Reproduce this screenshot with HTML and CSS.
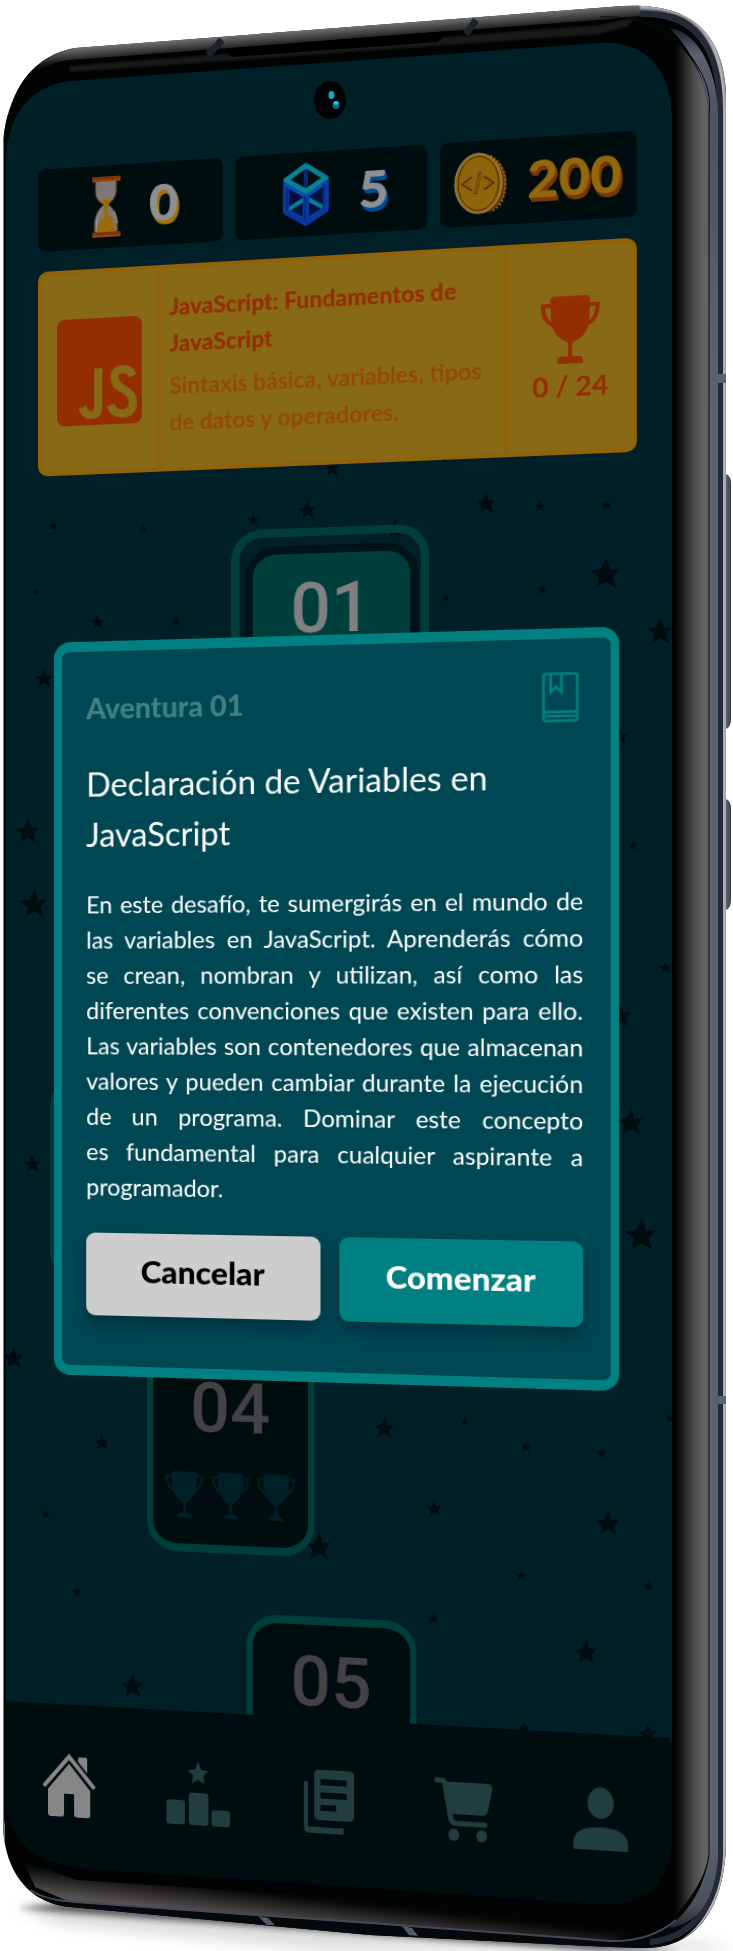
FILE: index.html
```html
<!DOCTYPE html>
<html lang="es">
<head>
<meta charset="utf-8">
<meta name="viewport" content="width=device-width, initial-scale=1">
<title>Aventura 01</title>
<link rel="stylesheet" href="styles.css">
</head>
<body>
<div class="stage">
  <svg class="phone" viewBox="0 0 733 1951" preserveAspectRatio="none" aria-hidden="true">
    <defs>
      <linearGradient id="side" x1="673" x2="709" y1="0" y2="0" gradientUnits="userSpaceOnUse">
        <stop offset="0" stop-color="#000"/><stop offset=".14" stop-color="#0c0c0c"/><stop offset=".55" stop-color="#474747"/><stop offset=".85" stop-color="#636362"/><stop offset="1" stop-color="#5e5e5e"/>
      </linearGradient>
      <linearGradient id="rail" x1="0" x2="0" y1="25" y2="1935" gradientUnits="userSpaceOnUse">
        <stop offset="0" stop-color="#15171d"/><stop offset=".015" stop-color="#5c6070"/><stop offset=".05" stop-color="#4c545f"/><stop offset=".2" stop-color="#5b636f"/><stop offset=".95" stop-color="#5b636f"/><stop offset=".985" stop-color="#4a505b"/><stop offset="1" stop-color="#14171c"/>
      </linearGradient>
      <linearGradient id="key" x1="719" x2="732" y1="0" y2="0" gradientUnits="userSpaceOnUse">
        <stop offset="0" stop-color="#3a404c"/><stop offset=".5" stop-color="#656b78"/><stop offset="1" stop-color="#30343d"/>
      </linearGradient>
      <linearGradient id="topedge" x1="330" y1="22" x2="332" y2="48" gradientUnits="userSpaceOnUse">
        <stop offset="0" stop-color="#bbb"/><stop offset=".3" stop-color="#666"/><stop offset=".75" stop-color="#1c1c1c"/><stop offset="1" stop-color="#000"/>
      </linearGradient>
      <linearGradient id="chin" x1="345" y1="1893" x2="341" y2="1928" gradientUnits="userSpaceOnUse">
        <stop offset="0" stop-color="#000" stop-opacity="0"/><stop offset=".3" stop-color="#0b0a0a"/><stop offset="1" stop-color="#555150"/>
      </linearGradient>
      <filter id="soft" x="-20%" y="-100%" width="140%" height="300%"><feGaussianBlur stdDeviation="7"/></filter>
      <filter id="softer" x="-20%" y="-100%" width="140%" height="300%"><feGaussianBlur stdDeviation="3"/></filter>
      <filter id="fine" x="-20%" y="-20%" width="140%" height="140%"><feGaussianBlur stdDeviation="1"/></filter>
      <symbol id="star" viewBox="-10 -10 20 20"><path d="M1-10 3-3 9-3 5 2 7 9 1 5-5 8-4 2-9-2-3-3Z"/></symbol>
      <clipPath id="body"><path d="M3 152C3 116 18 58 75 48L610 7C668 1 721 14 726 90V1845C724 1905 700 1950 640 1948L610 1947 370 1935 70 1907C20 1902 3 1860 3 1822Z"/></clipPath>
      <clipPath id="glass"><path d="M6 163C6 118 28 86 70 81L600 43C648 40 671 72 672 117V1837C672 1882 645 1907 600 1904L77 1866C35 1864 6 1838 6 1795Z"/></clipPath>
    </defs>
    <path d="M16 1907 90 1902 700 1942 733 1950V1951H330L60 1925Z" fill="#bbb" filter="url(#soft)" opacity=".5"/>
    <path d="M18 1908 70 1902 640 1946 680 1951H600L70 1913Z" fill="#222" filter="url(#softer)" opacity=".7"/>
    <path d="M719 474h7q5 2 5 9v236q0 8-5 10h-7ZM719 799h7q5 2 5 9v92q0 8-5 10h-7Z" fill="url(#key)"/>
    <g clip-path="url(#body)">
      <path d="M0 0h733v1951H0Z" fill="#020303"/>
      <path d="M0 140H5V1860H0Z" fill="#73797b"/>
      <path d="M4 120 8 90V1840L4 1820Z" fill="#050606"/>
      <path d="M0 100C20 55 60 46 75 45L610 4 650 0 690 14 650 15 610 19 70 60Q34 64 20 90Z" fill="url(#topedge)"/>
      <path d="M70 66 600 25 634 18 628 26 600 34 70 72Z" fill="#333" filter="url(#fine)" opacity=".5"/>
      <path d="M673 40Q706 66 709 115V1855Q704 1885 673 1918Z" fill="url(#side)"/>
      <path d="M640 6C700 6 724 40 724 110V1855C722 1905 698 1944 640 1946" fill="none" stroke="#aeb0b4" stroke-width="6" filter="url(#fine)"/>
      <path d="M25 1888Q40 1901 70 1903L370 1924 610 1942Q668 1942 700 1900L722 1855V1860C718 1910 690 1951 640 1951H0V1870Z" fill="#06090b"/>
      <path d="M640 14C694 12 720 46 720 110V1855C718 1902 694 1938 650 1942" fill="none" stroke="#252b35" stroke-width="6"/>
      <path d="M670 28C698 32 717 70 718 112V1858C715 1898 700 1924 668 1928Q703 1900 709 1855V115Q706 66 670 28Z" fill="url(#rail)"/>
      <path d="M600 17Q654 14 684 48T709 115V1855Q705 1888 672 1918" fill="none" stroke="#0c0e12" stroke-width="1"/>
      <path d="M222 40 208 55M476 20 466 34" stroke="#1c232b" stroke-width="7"/>
      <path d="M222 49 448 31 446 34 438 42 232 57Z" fill="#000"/>
      <path d="M24 1862 77 1880 600 1915 650 1900 676 1900 660 1925 610 1941 70 1902 35 1887Z" fill="url(#chin)"/>
      <path d="M30 1890Q45 1900 75 1902L370 1923 610 1941Q650 1942 676 1920" fill="none" stroke="#444956" stroke-width="2"/>
      <path d="M258 1916 268 1918 275 1925 267 1925ZM402 1926 412 1928 418 1936 409 1935Z" fill="#555a68"/>
      <path d="M712 374h15v9h-15ZM712 1396h15v8h-15Z" fill="#59616d"/>
    </g>
    <g clip-path="url(#glass)">
      <path d="M0 0H733V1951H0Z" fill="#001f27"/>
      <g fill="#000d10">
        <use href="#star" x="324" y="460" width="16" height="16"/><use href="#star" x="441" y="456" width="7" height="7"/><use href="#star" x="475" y="492" width="21" height="23"/><use href="#star" x="298" y="500" width="18" height="21"/><use href="#star" x="247" y="513" width="12" height="14"/><use href="#star" x="48" y="520" width="10" height="12"/><use href="#star" x="139" y="524" width="8" height="10"/><use href="#star" x="385" y="516" width="19" height="26"/><use href="#star" x="534" y="500" width="11" height="13"/><use href="#star" x="601" y="498" width="11" height="14"/><use href="#star" x="589" y="555" width="32" height="38"/><use href="#star" x="33" y="587" width="7" height="10"/><use href="#star" x="90" y="613" width="14" height="18"/><use href="#star" x="171" y="615" width="10" height="13"/><use href="#star" x="442" y="593" width="8" height="10"/><use href="#star" x="537" y="583" width="10" height="13"/><use href="#star" x="646" y="615" width="27" height="33"/><use href="#star" x="34" y="666" width="19" height="25"/><use href="#star" x="15" y="816" width="25" height="31"/><use href="#star" x="612" y="724" width="16" height="26"/><use href="#star" x="628" y="839" width="10" height="13"/>
        <use href="#star" x="19" y="886" width="29" height="36"/><use href="#star" x="659" y="960" width="12" height="15"/><use href="#star" x="608" y="1002" width="24" height="28"/><use href="#star" x="617" y="1107" width="27" height="31"/><use href="#star" x="23" y="1152" width="18" height="24"/><use href="#star" x="624" y="1214" width="33" height="42"/><use href="#star" x="2" y="1344" width="22" height="28"/><use href="#star" x="94" y="1433" width="15" height="19"/><use href="#star" x="41" y="1508" width="9" height="12"/><use href="#star" x="373" y="1414" width="22" height="28"/><use href="#star" x="460" y="1416" width="9" height="11"/><use href="#star" x="520" y="1440" width="11" height="14"/><use href="#star" x="596" y="1446" width="11" height="14"/><use href="#star" x="665" y="1412" width="9" height="12"/><use href="#star" x="426" y="1498" width="16" height="21"/><use href="#star" x="595" y="1507" width="25" height="33"/><use href="#star" x="304" y="1530" width="28" height="34"/><use href="#star" x="516" y="1570" width="10" height="12"/>
        <use href="#star" x="71" y="1585" width="11" height="14"/><use href="#star" x="643" y="1579" width="11" height="15"/><use href="#star" x="427" y="1612" width="12" height="14"/><use href="#star" x="573" y="1636" width="25" height="33"/><use href="#star" x="120" y="1670" width="24" height="32"/><use href="#star" x="518" y="1721" width="12" height="14"/><use href="#star" x="637" y="1724" width="20" height="20"/>
      </g>
      <rect x="50" y="1083" width="40" height="192" rx="22" fill="#00393c"/>
      <path d="M0 1705 733 1747V1951H0Z" fill="#000d0e"/>
      <ellipse cx="330" cy="100" rx="16" ry="19" fill="#000303"/>
      <ellipse cx="331.500" cy="95" rx="3" ry="4" fill="#14a4c8"/><ellipse cx="336" cy="105" rx="3.500" ry="4" fill="#086a94"/><ellipse cx="336" cy="103" rx="2.500" ry="2" fill="#1fc0dc"/>
    </g>
  </svg>

  <main class="screen">
    <ul class="stats">
      <li class="stat">
        <svg class="stat-icon" width="28" height="62" viewBox="0 0 28 62" aria-label="Tiempo"><path d="M3 5H24V16Q23 24 16 29Q23 34 25 45V56H2V45Q4 34 11 29Q3 24 3 16Z" fill="#807673" stroke="#302820"/><path d="M7 24H21L15 29V39Q22 43 23 56H4Q4 46 12 41V30Z" fill="#9a6908"/><path d="M4 55 5 41 10 34M22 36 25 48" stroke="#9b9ba4" fill="none"/><path d="M0 1H28V6H0ZM0 56H28V61H0Z" fill="#7c3308"/><path d="M0 4H28V6H0ZM0 59H28V61H0Z" fill="#9a440b"/></svg>
        <span class="value value-time">0</span>
      </li>
      <li class="stat">
        <svg class="stat-icon" width="44" height="62" viewBox="0 0 44 62" aria-label="Cubos"><path d="M6 22 22 32V56L6 46ZM38 22 22 32V56L38 46Z" fill="#03123c"/><g fill="none" stroke-linejoin="round"><path d="M22 1V34M2 48 22 34 42 48" stroke="#062b70" stroke-width="4"/><path d="M3 46 22 35 41 46 22 57Z" stroke="#087a91" stroke-width="4"/><path d="M3 17V47L22 59 41 47V17M22 30V58" stroke="#0838a0" stroke-width="6"/><path d="M3 19 22 31 41 19" stroke="#0b4cb0" stroke-width="7"/><path d="M3 16 22 3 41 16 22 28Z" stroke="#0a8195" stroke-width="5"/><path d="M21 33V57M4 21V46M39 21V46" stroke="#051f64" stroke-width="1"/></g></svg>
        <span class="value value-cube">5</span>
      </li>
      <li class="stat">
        <svg class="stat-icon" width="50" height="60" viewBox="0 0 50 60" aria-label="Monedas"><ellipse cx="27" cy="31" rx="22" ry="28" fill="#6b3608"/><path d="M34 4Q49 14 48 34T34 58" fill="none" stroke="#a8660c" stroke-width="2" stroke-dasharray="2 2"/><ellipse cx="23" cy="30" rx="22" ry="29" fill="#9a6b0a" stroke="#7f8590" stroke-width="1"/><ellipse cx="23" cy="30" rx="19" ry="26" fill="#8f640b" stroke="#3d2a05" stroke-width="1"/><path d="M17 24 9 30 17 36M28 24 36 30 28 36M25 19 20 40" fill="none" stroke="#5d2f07" stroke-width="3"/><path d="M17 25 10 30 17 35M28 25 35 30 28 35M25 20 20 39" fill="none" stroke="#a87710" stroke-width="1"/></svg>
        <span class="value value-coin">200</span>
      </li>
    </ul>

    <section class="course">
      <div class="course-logo">
        <svg class="js" viewBox="0 0 84 106" role="img" aria-label="JavaScript"><rect width="84" height="106" rx="8" fill="#932e00"/><path d="M41 50V87Q41 96 34 96Q28 96 25 88M75 59Q72 52 66 52Q57 52 57 60Q57 67 66 72Q75 77 75 85Q75 96 65 96Q56 96 53 87" fill="none" stroke="#886a16" stroke-width="8"/></svg>
      </div>
      <div class="course-text">
        <h1 class="course-title">JavaScript: Fundamentos de JavaScript</h1>
        <p class="course-desc">Sintaxis básica, variables, tipos<br>de datos y operadores.</p>
      </div>
      <div class="course-score">
        <svg class="trophy" width="56" height="68" viewBox="0 0 56 68" aria-hidden="true"><path d="M12 1H44Q47 1 47 5L46 28Q44 42 30 47V61H37Q41 62 40 68H16Q15 62 19 61H26V47Q13 42 10 28L9 5Q9 1 12 1Z" fill="currentColor"/><path d="M10 10H2Q2 27 14 30M46 10H54Q54 27 42 30" fill="none" stroke="currentColor" stroke-width="4"/></svg>
        <span>0 / 24</span>
      </div>
    </section>

    <section class="map">
      <div class="ring"></div>
      <a class="node node-current" href="#n1">01</a>
      <a class="node node-four" href="#n4">04
        <span class="cups" aria-hidden="true">
          <svg class="cup" viewBox="0 0 56 68" preserveAspectRatio="none"><path d="M10 1H46L47 18Q45 38 30 47V61Q39 62 39 68H17Q17 62 26 61V47Q11 38 9 18Z" fill="currentColor"/><path d="M10 8H2Q2 25 14 30M46 8H54Q54 25 42 30" fill="none" stroke="currentColor" stroke-width="3"/></svg>
          <svg class="cup" viewBox="0 0 56 68" preserveAspectRatio="none"><path d="M10 1H46L47 18Q45 38 30 47V61Q39 62 39 68H17Q17 62 26 61V47Q11 38 9 18Z" fill="currentColor"/><path d="M10 8H2Q2 25 14 30M46 8H54Q54 25 42 30" fill="none" stroke="currentColor" stroke-width="3"/></svg>
          <svg class="cup" viewBox="0 0 56 68" preserveAspectRatio="none"><path d="M10 1H46L47 18Q45 38 30 47V61Q39 62 39 68H17Q17 62 26 61V47Q11 38 9 18Z" fill="currentColor"/><path d="M10 8H2Q2 25 14 30M46 8H54Q54 25 42 30" fill="none" stroke="currentColor" stroke-width="3"/></svg>
        </span>
      </a>
      <a class="node node-five" href="#n5">05</a>

      <div class="overlay">
        <div class="dialog" role="dialog" aria-labelledby="dialog-title">
          <div class="dialog-head">
            <span class="dialog-kicker">Aventura 01</span>
            <svg width="34" height="48" viewBox="0 0 34 48" fill="none" stroke="#008080" stroke-width="2.500" aria-hidden="true"><rect x="1.500" y="1.500" width="31" height="45" rx="2"/><path d="M1 38H33M3 42H31" stroke-width="2.500"/><path d="M8 2V19L13 14 18 19V2"/></svg>
          </div>
          <h2 class="dialog-title" id="dialog-title">Declaración de Variables en<br>JavaScript</h2>
          <p class="dialog-text"><span>En este desafío, te sumergirás en el mundo de</span> <span>las variables en JavaScript. Aprenderás cómo</span> <span>se crean, nombran y utilizan, así como las</span> <span>diferentes convenciones que existen para ello.</span> <span>Las variables son contenedores que almacenan</span> <span>valores y pueden cambiar durante la ejecución</span> <span>de un programa. Dominar este concepto</span> <span>es fundamental para cualquier aspirante a</span> <span class="last">programador.</span></p>
          <div class="actions">
            <button class="btn btn-cancel" type="button">Cancelar</button>
            <button class="btn btn-start" type="button">Comenzar</button>
          </div>
        </div>
      </div>
    </section>

    <nav class="tabs">
      <a class="tab tab-active" href="#home" aria-label="Inicio"><svg width="52" height="64" viewBox="0 0 52 64"><path d="M35 4Q35 3 37 3H42Q44 3 44 5V24L35 13Z" fill="currentColor"/><path d="M2 32 26 3 50 32" fill="none" stroke="#000d0e" stroke-width="8"/><path d="M2 32 26 3 50 32" fill="none" stroke="currentColor" stroke-width="4" stroke-linecap="round"/><path d="M26 10 47 36V60Q47 63 44 63H34Q31 63 31 60V40H21V60Q21 63 18 63H8Q5 63 5 60V36Z" fill="currentColor"/></svg></a>
      <a class="tab" href="#ranking" aria-label="Clasificación"><svg width="62" height="64" viewBox="0 0 62 64" fill="currentColor"><path d="M31 0 34 8 41 9 36 14 37 22 31 18 25 22 26 14 21 9 28 8Z"/><rect y="39" width="18" height="24" rx="3"/><rect x="22" y="31" width="19" height="32" rx="3"/><rect x="44" y="47" width="18" height="16" rx="3"/></svg></a>
      <a class="tab" href="#docs" aria-label="Lecciones"><svg width="48" height="62" viewBox="0 0 48 62"><path fill="currentColor" fill-rule="evenodd" d="M14 0H43Q48 0 48 5V44Q48 49 43 49H14Q10 49 10 44V5Q10 0 14 0ZM16 9V15H41V9ZM16 22V28H41V22ZM16 34V40H31V34Z"/><path d="M0 12H4V56H38V62H5Q0 62 0 56Z" fill="currentColor"/></svg></a>
      <a class="tab" href="#shop" aria-label="Tienda"><svg width="54" height="62" viewBox="0 0 54 62"><path d="M2 3H7Q9 3 10 8L15 38Q16 44 20 44H47" fill="none" stroke="currentColor" stroke-width="5" stroke-linecap="round"/><path d="M9 4H50Q54 4 54 9L50 30Q49 35 45 35H15Z" fill="currentColor"/><ellipse cx="18" cy="55" rx="5" ry="6" fill="currentColor"/><ellipse cx="44" cy="55" rx="5" ry="6" fill="currentColor"/></svg></a>
      <a class="tab" href="#profile" aria-label="Perfil"><svg width="50" height="60" viewBox="0 0 50 60" fill="currentColor"><ellipse cx="25" cy="15" rx="12" ry="15"/><path d="M0 60V52Q2 38 25 38T50 52V60Z"/></svg></a>
    </nav>
  </main>
</div>
</body>
</html>
```

FILE: styles.css
```css
* { box-sizing: border-box; }

body {
  margin: 0;
  background: #fff;
  font-family: Lato, "Open Sans", sans-serif;
}

.stage {
  position: relative;
  overflow: hidden;
  padding: 86px 94px 88px 6px;
}

.phone {
  position: absolute;
  inset: 0;
  width: 100%;
  height: 100%;
}

.screen {
  position: relative;
  display: flex;
  flex-direction: column;
  overflow: hidden;
  border-radius: 72px;
  transform: perspective(1100px) rotateY(-5deg);
  transform-origin: 0 914px;
}

/* Counters */
.stats {
  display: grid;
  grid-template-columns: repeat(3, 1fr);
  gap: 12px;
  margin: 86px 30px 20px 32px;
  padding: 0;
  list-style: none;
}

.stat {
  display: flex;
  align-items: center;
  justify-content: center;
  gap: 28px;
  height: 82px;
  padding-left: 10px;
  border-radius: 8px;
  background: #000d0e;
}

.stat:last-child {
  gap: 18px;
  padding-left: 0;
}

.value {
  margin-top: -4px;
  font-size: 50px;
  font-weight: 900;
  line-height: 60px;
  color: #8f8f91;
}

.value-time { text-shadow: 1px 2px #a87107, 2px 4px #a87107; }
.value-cube { text-shadow: 1px 2px #014d94, 2px 4px #014d94; }
.value-coin { color: #92670d; text-shadow: 1px 2px #793708, 2px 4px #793708; }

/* Course banner */
.course {
  display: grid;
  grid-template-columns: 114px 1fr 114px;
  min-height: 204px;
  margin: 0 30px 0 32px;
  border: 4px solid #926209;
  border-radius: 10px;
  background: #886a16;
  color: #932e00;
}

.course-logo,
.course-score {
  display: flex;
  flex-direction: column;
  align-items: center;
  justify-content: center;
}

.js { width: 84px; }

.course-text {
  padding: 20px 8px;
  border: solid #926209;
  border-width: 0 4px;
}

.course-title,
.course-desc {
  margin: 0;
  font-size: 22px;
  line-height: 36px;
}

.course-title { font-weight: 900; }

.course-desc {
  margin-top: 6px;
  font-weight: 700;
  color: #934a02;
}

.course-score {
  gap: 4px;
  font-size: 26px;
  font-weight: 700;
  line-height: 32px;
}

.trophy { width: 54px; }

/* Adventure map */
.map {
  position: relative;
  min-height: 1223px;
}

.ring,
.node {
  position: absolute;
  border: 8px solid #003e3c;
  border-radius: 30px;
}

.ring {
  left: 35%;
  top: 61px;
  width: 30%;
  height: 220px;
}

.node {
  width: 162px;
  height: 220px;
  border-width: 8px 6px;
  background: #000d0e;
  color: #454244;
  font-family: Roboto, sans-serif;
  font-size: 68px;
  font-weight: 500;
  line-height: 88px;
  text-align: center;
  text-decoration: none;
}

.node-current {
  left: 243px;
  top: 86px;
  width: 150px;
  padding-top: 2px;
  border-radius: 22px;
  background: #003e3c;
  box-shadow: 0 0 0 8px #001318;
  color: #808080;
}

.node-four {
  left: 140px;
  top: 846px;
  padding-top: 26px;
}

.node-five {
  left: 237px;
  top: 1124px;
  padding-top: 12px;
}

.cups {
  display: flex;
  justify-content: space-between;
  padding: 18px 12px;
  color: #001f27;
}

.cup {
  width: 37px;
  height: 46px;
}

/* Dialog */
.overlay {
  position: absolute;
  inset: 0;
  padding: 166px 46px 0 48px;
}

.dialog {
  padding: 32px 25px 50px 24px;
  border: solid #008080;
  border-width: 10px 8px;
  border-radius: 16px;
  background: #004754;
  color: #fff;
}

.dialog-head {
  display: flex;
  align-items: center;
  justify-content: space-between;
  padding-right: 4px;
}

.dialog-kicker {
  font-size: 28px;
  font-weight: 900;
  line-height: 40px;
  color: #417f82;
}

.dialog-title {
  margin: 27px 0;
  font-size: 32px;
  font-weight: 400;
  line-height: 50px;
}

.dialog-text {
  margin: 0;
  font-size: 23px;
  line-height: 35px;
}

.dialog-text span {
  display: block;
  text-align: justify;
  text-align-last: justify;
}

.dialog-text .last { text-align-last: left; }

.actions {
  display: grid;
  grid-template-columns: 1fr 1fr;
  gap: 18px;
  margin-top: 28px;
}

.btn {
  height: 82px;
  padding: 0 0 8px;
  border: 0;
  border-radius: 9px;
  font-family: inherit;
  font-size: 31px;
  font-weight: 900;
  box-shadow: 0 10px 14px rgba(0, 30, 38, .45);
}

.btn-cancel { background: #cdcdcd; color: #000; }
.btn-start { background: #008080; color: #fff; }

/* Bottom navigation */
.tabs {
  position: relative;
  display: grid;
  grid-template-columns: repeat(5, 1fr);
  min-height: 162px;
  background: #000d0e;
}

.tab {
  display: flex;
  align-items: center;
  justify-content: center;
  color: #223d3d;
}

.tab-active { color: #868686; }
```
